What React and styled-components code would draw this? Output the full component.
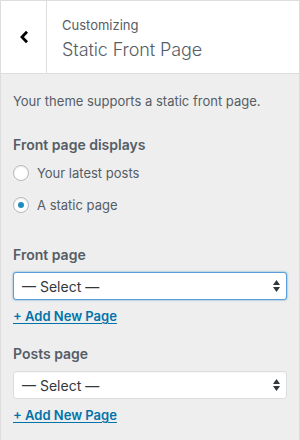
import styled, { createGlobalStyle } from "styled-components";

const GlobalStyle = createGlobalStyle`
    html, body {
        margin: 0;
        padding: 0;
        background: #eeeeee;
    }
    body {
        font-family: Inter, "Noto Sans", sans-serif;
        color: #555d66;
    }
`;

export const Panel = styled.div`
    width: 300px;
    height: 440px;
    box-sizing: border-box;
    background: #eeeeee;
    border: 1px solid #dddddd;
    border-bottom: 0;
    display: flex;
    flex-direction: column;
`;

export const Header = styled.header`
    display: flex;
    height: 72px;
    background: #ffffff;
    border-bottom: 1px solid #dddddd;
`;

export const BackButton = styled.button`
    width: 46px;
    border: 0;
    border-right: 1px solid #dddddd;
    background: #ffffff;
    display: flex;
    align-items: center;
    justify-content: center;
    padding: 0 0 1px 0;
    cursor: pointer;
    color: #000;
`;

export const Titles = styled.div`
    padding: 14px 0 0 15px;

    & span {
        display: block;
        font-size: 13px;
        line-height: 20px;
        color: #555d66;
    }

    & h3 {
        margin: 1px 0 0;
        font-size: 18px;
        font-weight: 300;
        line-height: 28px;
        color: #555d66;
        letter-spacing: -0.1px;
    }
`;

export const Body = styled.div`
    padding: 17px 12px 0 12px;
    display: flex;
    flex-direction: column;
`;

export const Description = styled.p`
    margin: 0 0 24px;
    font-size: 13px;
    line-height: 20px;
    color: #555d66;
`;

export const Label = styled.div`
    font-size: 14px;
    font-weight: 600;
    line-height: 20px;
    color: #555d66;
    margin-bottom: ${props => props.gap || 6}px;
`;

export const RadioRow = styled.label`
    display: flex;
    align-items: center;
    gap: 8px;
    height: 32px;
    font-size: 13px;
    color: #555d66;
`;

export const RadioDot = styled.span`
    width: 16px;
    height: 16px;
    box-sizing: border-box;
    border-radius: 50%;
    border: 1px solid #b4b9be;
    background: #ffffff;
    box-shadow: inset 0 1px 2px rgba(0, 0, 0, 0.07);
    display: flex;
    align-items: center;
    justify-content: center;

    &::after {
        content: "";
        width: 6px;
        height: 6px;
        border-radius: 50%;
        background: #1e8cbe;
        display: ${props => props.checked ? "block" : "none"};
    }
`;

export const Field = styled.div`
    display: flex;
    flex-direction: column;
    margin-top: ${props => props.top}px;
`;

export const SelectBox = styled.div`
    height: 28px;
    box-sizing: border-box;
    background: #ffffff;
    border: 1px solid ${props => props.focused ? "#5b9dd9" : "#dddddd"};
    border-radius: 3px;
    box-shadow: ${props => props.focused ? "0 0 2px rgba(30, 140, 190, 0.8)" : "inset 0 1px 2px rgba(0,0,0,0.04)"};
    display: flex;
    align-items: center;
    justify-content: space-between;
    padding: 0 6px 0 8px;
    font-size: 14px;
    color: #32373c;
`;

export const AddLink = styled.a`
    margin-top: 6px;
    font-size: 13px;
    font-weight: 600;
    line-height: 20px;
    color: #0073aa;
    text-decoration: underline;
    text-underline-offset: 2px;
    align-self: flex-start;
`;

function Arrows() {
    return (
        <svg width="7" height="12" viewBox="0 0 7 12">
            <path d="M3.5 0 L7 5 L0 5 Z" fill="#32373c" />
            <path d="M0 7 L7 7 L3.5 12 Z" fill="#32373c" />
        </svg>
    );
}

function PageSelect({ label, focused, top }) {
    return (
        <Field top={top}>
            <Label gap={7}>{label}</Label>
            <SelectBox focused={focused}>
                <span>— Select —</span>
                <Arrows />
            </SelectBox>
            <AddLink href="#">+ Add New Page</AddLink>
        </Field>
    );
}

export default function App() {
    return (
        <>
            <GlobalStyle />
            <Panel>
                <Header>
                    <BackButton aria-label="Back">
                        <svg width="10" height="14" viewBox="0 0 10 14">
                            <path d="M8 1.8 L3 7 L8 12.2" fill="none" stroke="#000" strokeWidth="2.8" />
                        </svg>
                    </BackButton>
                    <Titles>
                        <span>Customizing</span>
                        <h3>Static Front Page</h3>
                    </Titles>
                </Header>
                <Body>
                    <Description>Your theme supports a static front page.</Description>
                    <Label gap={2}>Front page displays</Label>
                    <RadioRow>
                        <RadioDot />
                        Your latest posts
                    </RadioRow>
                    <RadioRow>
                        <RadioDot checked />
                        A static page
                    </RadioRow>
                    <PageSelect label="Front page" focused top={24} />
                    <PageSelect label="Posts page" top={18} />
                </Body>
            </Panel>
        </>
    );
}
